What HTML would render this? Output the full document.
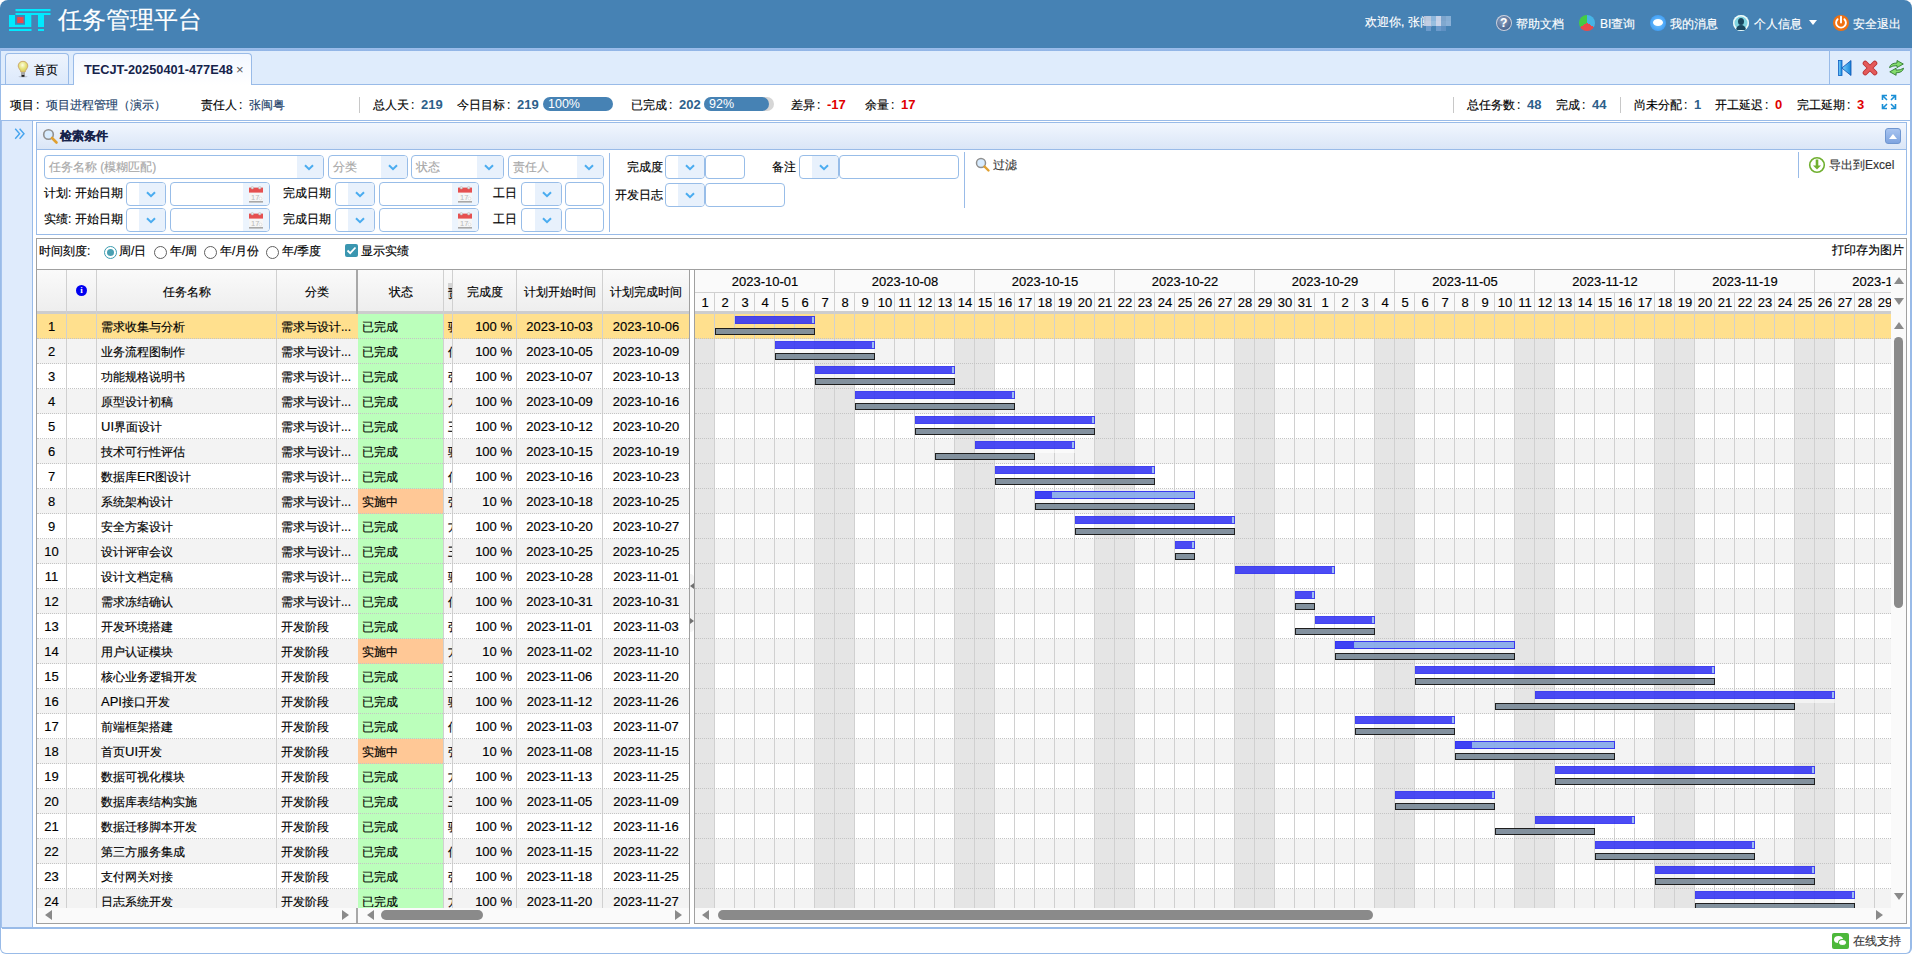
<!DOCTYPE html><html><head><meta charset="utf-8"><style>
*{box-sizing:border-box;margin:0;padding:0}
html,body{width:1912px;height:954px;overflow:hidden;background:#fff}
body{position:relative;font-family:"Liberation Sans",sans-serif;font-size:12px;color:#000}
div{position:absolute}
.t{white-space:nowrap;line-height:14px;-webkit-text-stroke:0.15px}
.n{font-size:13px}
.co{display:inline-block;width:12px;text-indent:2px}
.vl{width:1px;background:#d0d0d0}
</style></head><body>
<div style="left:0px;top:0px;width:1912px;height:48px;background:#4682b4;border-radius:8px 8px 0 0"></div>
<svg style="position:absolute;left:0;top:0" width="60" height="40"><g fill="#00eaff"><rect x="15.5" y="9" width="35" height="2.2"/><rect x="15.5" y="13" width="35" height="2"/><path d="M9 15H15V24.7H25V15H31.3V27H9Z"/><rect x="38" y="15" width="6" height="12"/><rect x="9" y="29" width="22.5" height="2"/><rect x="38" y="29" width="6" height="2"/></g><rect x="17.2" y="17" width="6.3" height="6" fill="#f04848"/></svg>
<div class="t" style="left:58px;top:7px;font-size:24px;line-height:26px;color:#fff">任务管理平台</div>
<div class="t" style="left:1365px;top:15px;font-size:12px;color:#fff">欢迎你, 张闽</div>
<div style="left:1424px;top:16px;width:2px;height:5px;background:#b4c2da"></div>
<div style="left:1426px;top:16px;width:5px;height:5px;background:#bccadf"></div>
<div style="left:1431px;top:16px;width:5px;height:5px;background:#8cb6dc"></div>
<div style="left:1436px;top:16px;width:5px;height:5px;background:#c6d2e8"></div>
<div style="left:1441px;top:16px;width:5px;height:5px;background:#7ca4cc"></div>
<div style="left:1446px;top:16px;width:5px;height:5px;background:#86aed4"></div>
<div style="left:1424px;top:21px;width:2px;height:5px;background:#bcc8de"></div>
<div style="left:1426px;top:21px;width:5px;height:5px;background:#c2cee3"></div>
<div style="left:1431px;top:21px;width:5px;height:5px;background:#98bedf"></div>
<div style="left:1436px;top:21px;width:5px;height:5px;background:#cad4e9"></div>
<div style="left:1441px;top:21px;width:5px;height:5px;background:#80a8cf"></div>
<div style="left:1446px;top:21px;width:5px;height:5px;background:#8ab0d7"></div>
<div style="left:1426px;top:26px;width:5px;height:5px;background:#6c9bcc"></div>
<div style="left:1436px;top:26px;width:5px;height:5px;background:#6c9bcc"></div>
<div style="left:1441px;top:26px;width:5px;height:5px;background:#5f90c2"></div>
<div style="left:1496px;top:15px;width:16px;height:16px;border-radius:50%;background:radial-gradient(circle at 40% 35%,#8aa0c0,#2c4a7a);box-shadow:0 0 0 1px #c8d2e0 inset"><div class="t" style="left:4px;top:1px;font-size:12px;font-weight:bold;color:#fff">?</div></div>
<div class="t" style="left:1516px;top:17px;color:#fff;font-size:12px">帮助文档</div>
<div style="left:1579px;top:15px;width:16px;height:16px;border-radius:50%;background:conic-gradient(#46b4e6 0 120deg,#e84a4a 120deg 240deg,#44cc44 240deg 360deg)"></div>
<div class="t" style="left:1600px;top:17px;color:#fff;font-size:12px">BI查询</div>
<div style="left:1650px;top:15px;width:16px;height:16px;border-radius:50%;background:radial-gradient(circle,#7cc8ff,#2a8ef0)"><div style="left:3px;top:4px;width:10px;height:7px;border-radius:50%;background:#fff"></div></div>
<div class="t" style="left:1670px;top:17px;color:#fff;font-size:12px">我的消息</div>
<div style="left:1733px;top:15px;width:16px;height:16px;border-radius:50%;background:#80d4e0;box-shadow:0 0 0 1.5px #f0f8f8 inset;overflow:hidden"><div style="left:5px;top:3px;width:6px;height:7px;border-radius:50%;background:#1a4860"></div><div style="left:3px;top:10px;width:10px;height:5px;border-radius:5px 5px 0 0;background:#1a4860"></div></div>
<div class="t" style="left:1754px;top:17px;color:#fff;font-size:12px">个人信息</div>
<div style="left:1809px;top:20px;width:0;height:0;border-left:4px solid transparent;border-right:4px solid transparent;border-top:5px solid #fff"></div>
<svg style="position:absolute;left:1832px;top:14px" width="18" height="18"><circle cx="9" cy="9" r="8" fill="#f07010"/><path d="M5.6 5.2A4.9 4.9 0 1 0 12.4 5.2" stroke="#fff" stroke-width="1.9" fill="none" stroke-linecap="round"/><path d="M9 2.8V8.6" stroke="#fff" stroke-width="1.9" stroke-linecap="round"/></svg>
<div class="t" style="left:1853px;top:17px;color:#fff;font-size:12px">安全退出</div>
<div style="left:0px;top:48px;width:1912px;height:906px;border:1px solid #99bbe8;border-right:2px solid #99bbe8;border-top:0;border-bottom:1px solid #99bbe8;border-radius:0 0 6px 6px;background:#fff"></div>
<div style="left:1px;top:48px;width:1909px;height:3px;background:linear-gradient(#9dbeea,#90b4e6)"></div>
<div style="left:1px;top:51px;width:1909px;height:33px;background:#dfecfc"></div>
<div style="left:1px;top:84px;width:1909px;height:1px;background:#99bbe8"></div>
<div style="left:5px;top:53px;width:64px;height:31px;border:1px solid #99bbe8;border-bottom:0;border-radius:4px 4px 0 0;background:linear-gradient(#eef4fd,#dce9fb)"></div>
<div style="left:73px;top:53px;width:179px;height:32px;border:1px solid #99bbe8;border-bottom:0;border-radius:4px 4px 0 0;background:linear-gradient(#f2f7ff,#fff)"></div>
<svg style="position:absolute;left:16px;top:60px" width="14" height="18"><defs><radialGradient id="bl" cx="0.45" cy="0.35" r="0.6"><stop offset="0" stop-color="#fdfde0"/><stop offset="0.6" stop-color="#e6e27a"/><stop offset="1" stop-color="#d8cc60"/></radialGradient></defs><path d="M7 1.3C4.2 1.3 2.2 3.3 2.2 6C2.2 8.3 4.6 9.8 5 12.2H9C9.4 9.8 11.8 8.3 11.8 6C11.8 3.3 9.8 1.3 7 1.3Z" fill="url(#bl)" stroke="#c8a46a" stroke-width="0.9"/><rect x="5" y="12.2" width="4" height="3" fill="#a8a8a8"/><rect x="5.5" y="15" width="3" height="1.8" fill="#222"/><ellipse cx="7" cy="16.6" rx="4.5" ry="0.9" fill="rgba(0,0,0,.15)"/></svg>
<div class="t" style="left:34px;top:63px;font-size:12px">首页</div>
<div class="t" style="left:84px;top:63px;font-size:12.75px;font-weight:bold;color:#15224a;-webkit-text-stroke:0">TECJT-20250401-477E48</div>
<div class="t" style="left:236px;top:63px;font-size:13px;color:#555;-webkit-text-stroke:0">×</div>
<div style="left:1829px;top:50px;width:1px;height:34px;background:#99bbe8"></div>
<svg style="position:absolute;left:1836px;top:58px" width="18" height="20"><defs><linearGradient id="gb" x1="0" x2="1"><stop offset="0" stop-color="#7fd4ff"/><stop offset="1" stop-color="#1684d8"/></linearGradient></defs><rect x="2.5" y="2.5" width="3.5" height="15" fill="url(#gb)" stroke="#0b5cc0" stroke-width="0.8"/><path d="M15 2.5V17.5L5.8 10Z" fill="url(#gb)" stroke="#0b4fb0" stroke-width="0.8"/></svg>
<svg style="position:absolute;left:1862px;top:60px" width="16" height="16"><path d="M3.2 3.2L12.8 12.8M12.8 3.2L3.2 12.8" stroke="#b83030" stroke-width="5" stroke-linecap="round"/><path d="M3.2 3.2L12.8 12.8M12.8 3.2L3.2 12.8" stroke="#e45a5a" stroke-width="3.4" stroke-linecap="round"/></svg>
<svg style="position:absolute;left:1888px;top:59px" width="17" height="18"><g stroke="#2f7a2f" stroke-width="0.9" stroke-linejoin="round" fill="#84dc6c"><path d="M1.5 8.6Q2.5 4 9 4V1.5L15.3 5L9 8.6V6.6Q4.5 6.6 1.5 8.6Z"/><path d="M15.6 9.2Q14.6 13.8 8.1 13.8V16.3L1.8 12.8L8.1 9.2V11.2Q12.6 11.2 15.6 9.2Z"/></g></svg>
<div style="left:1px;top:120px;width:1909px;height:1px;background:#99bbe8"></div>
<div class="t" style="left:10px;top:98px;">项目<span class=co>:</span><span style="color:#1c3f6a">项目进程管理（演示）</span></div>
<div class="t" style="left:201px;top:98px;">责任人<span class=co>:</span><span style="color:#1c3f6a">张闽粤</span></div>
<div style="left:359px;top:97px;width:1px;height:16px;background:#c8c8c8"></div>
<div class="t" style="left:373px;top:98px;font-size:12px">总人天<span class=co>:</span><span style="font-size:13px;font-weight:bold;color:#2d5f8a;-webkit-text-stroke:0">219</span></div>
<div class="t" style="left:457px;top:98px;font-size:12px">今日目标<span class=co>:</span><span style="font-size:13px;font-weight:bold;color:#2d5f8a;-webkit-text-stroke:0">219</span></div>
<div style="left:543px;top:97px;width:70px;height:14px;border-radius:7px;background:#4682b4"></div>
<div class="t" style="left:548px;top:97px;font-size:12.5px;color:#fff;-webkit-text-stroke:0">100%</div>
<div class="t" style="left:631px;top:98px;font-size:12px">已完成<span class=co>:</span><span style="font-size:13px;font-weight:bold;color:#2d5f8a;-webkit-text-stroke:0">202</span></div>
<div style="left:704px;top:97px;width:70px;height:14px;border-radius:7px;background:#d6d6d6"></div>
<div style="left:704px;top:97px;width:65px;height:14px;border-radius:7px;background:#4682b4"></div>
<div class="t" style="left:709px;top:97px;font-size:12.5px;color:#fff;-webkit-text-stroke:0">92%</div>
<div class="t" style="left:791px;top:98px;font-size:12px">差异<span class=co>:</span><span style="font-size:13px;font-weight:bold;color:#e00000;-webkit-text-stroke:0">-17</span></div>
<div class="t" style="left:865px;top:98px;font-size:12px">余量<span class=co>:</span><span style="font-size:13px;font-weight:bold;color:#e00000;-webkit-text-stroke:0">17</span></div>
<div style="left:1453px;top:97px;width:1px;height:16px;background:#c8c8c8"></div>
<div class="t" style="left:1467px;top:98px;font-size:12px">总任务数<span class=co>:</span><span style="font-size:13px;font-weight:bold;color:#2d5f8a;-webkit-text-stroke:0">48</span></div>
<div class="t" style="left:1556px;top:98px;font-size:12px">完成<span class=co>:</span><span style="font-size:13px;font-weight:bold;color:#2d5f8a;-webkit-text-stroke:0">44</span></div>
<div style="left:1620px;top:97px;width:1px;height:16px;background:#c8c8c8"></div>
<div class="t" style="left:1634px;top:98px;font-size:12px">尚未分配<span class=co>:</span><span style="font-size:13px;font-weight:bold;color:#2d5f8a;-webkit-text-stroke:0">1</span></div>
<div class="t" style="left:1715px;top:98px;font-size:12px">开工延迟<span class=co>:</span><span style="font-size:13px;font-weight:bold;color:#e00000;-webkit-text-stroke:0">0</span></div>
<div class="t" style="left:1797px;top:98px;font-size:12px">完工延期<span class=co>:</span><span style="font-size:13px;font-weight:bold;color:#e00000;-webkit-text-stroke:0">3</span></div>
<svg style="position:absolute;left:1881px;top:94px" width="16" height="16"><g stroke="#1a8fd6" stroke-width="1.6" fill="none"><path d="M1.5 6V1.5H6M1.5 1.5L6 6"/><path d="M10 1.5H14.5V6M14.5 1.5L10 6"/><path d="M1.5 10V14.5H6M1.5 14.5L6 10"/><path d="M14.5 10V14.5H10M14.5 14.5L10 10"/></g></svg>
<div style="left:1px;top:121px;width:31px;height:807px;background:#dfebfc;border-left:1px solid #a4c2ec"></div>
<div style="left:32px;top:121px;width:1px;height:807px;background:#99bbe8"></div>
<svg style="position:absolute;left:13px;top:127px" width="13" height="14"><path d="M2.2 1.8L6.6 6.8L2.2 11.8M6.6 1.8L11 6.8L6.6 11.8" stroke="#46a4ee" stroke-width="1.4" fill="none"/></svg>
<div style="left:2px;top:927px;width:1908px;height:2px;background:#99bbe8"></div>
<div style="left:36px;top:122px;width:1871px;height:113px;border:1px solid #99bbe8;background:#fff"></div>
<div style="left:37px;top:123px;width:1869px;height:26px;background:linear-gradient(#f1f6fe,#dae6f7)"></div>
<div style="left:37px;top:149px;width:1869px;height:1px;background:#99bbe8"></div>
<svg style="position:absolute;left:42px;top:128px" width="17" height="17"><circle cx="6.5" cy="6.5" r="4.8" fill="#d8ecff" stroke="#909090" stroke-width="1.6"/><path d="M10 10L14.5 14.5" stroke="#e0a030" stroke-width="2.6" stroke-linecap="round"/></svg>
<div class="t" style="left:60px;top:129px;font-weight:bold;color:#15224a;font-size:12px">检索条件</div>
<div style="left:1885px;top:128px;width:16px;height:16px;border:1px solid #6f96d0;border-radius:3px;background:linear-gradient(#a8c4f0,#7ea4e0)"><div style="left:3px;top:5px;width:0;height:0;border-left:4px solid transparent;border-right:4px solid transparent;border-bottom:5px solid #fff"></div></div>
<div style="left:44px;top:155px;width:280px;height:24px;border:1px solid #98bde8;border-radius:4px;background:#fff;overflow:hidden"><div style="left:252px;top:0;width:27px;height:22px;background:#e8f1fc"></div></div>
<div class="t" style="left:49px;top:160px;color:#a8a8a8;font-size:12px">任务名称 (模糊匹配)</div>
<svg style="position:absolute;left:304px;top:164px" width="10" height="7"><path d="M1 1.2L5 5.2L9 1.2" stroke="#4aacf0" stroke-width="2" fill="none"/></svg>
<div style="left:328px;top:155px;width:80px;height:24px;border:1px solid #98bde8;border-radius:4px;background:#fff;overflow:hidden"><div style="left:52px;top:0;width:27px;height:22px;background:#e8f1fc"></div></div>
<div class="t" style="left:333px;top:160px;color:#a8a8a8;font-size:12px">分类</div>
<svg style="position:absolute;left:388px;top:164px" width="10" height="7"><path d="M1 1.2L5 5.2L9 1.2" stroke="#4aacf0" stroke-width="2" fill="none"/></svg>
<div style="left:411px;top:155px;width:93px;height:24px;border:1px solid #98bde8;border-radius:4px;background:#fff;overflow:hidden"><div style="left:65px;top:0;width:27px;height:22px;background:#e8f1fc"></div></div>
<div class="t" style="left:416px;top:160px;color:#a8a8a8;font-size:12px">状态</div>
<svg style="position:absolute;left:484px;top:164px" width="10" height="7"><path d="M1 1.2L5 5.2L9 1.2" stroke="#4aacf0" stroke-width="2" fill="none"/></svg>
<div style="left:508px;top:155px;width:96px;height:24px;border:1px solid #98bde8;border-radius:4px;background:#fff;overflow:hidden"><div style="left:68px;top:0;width:27px;height:22px;background:#e8f1fc"></div></div>
<div class="t" style="left:513px;top:160px;color:#a8a8a8;font-size:12px">责任人</div>
<svg style="position:absolute;left:584px;top:164px" width="10" height="7"><path d="M1 1.2L5 5.2L9 1.2" stroke="#4aacf0" stroke-width="2" fill="none"/></svg>
<div class="t" style="left:44px;top:186px;font-size:12px">计划: 开始日期</div>
<div style="left:126px;top:182px;width:40px;height:24px;border:1px solid #98bde8;border-radius:4px;background:#fff;overflow:hidden"><div style="left:12px;top:0;width:27px;height:22px;background:#e8f1fc"></div></div>
<svg style="position:absolute;left:146px;top:191px" width="10" height="7"><path d="M1 1.2L5 5.2L9 1.2" stroke="#4aacf0" stroke-width="2" fill="none"/></svg>
<div style="left:170px;top:182px;width:100px;height:24px;border:1px solid #98bde8;border-radius:4px;background:#fff;overflow:hidden"><div style="left:72px;top:0;width:27px;height:22px;background:#ecf4fd"></div></div>
<svg style="position:absolute;left:248px;top:186px" width="16" height="18"><rect x="1" y="4.5" width="14" height="12" fill="#f6f6f6"/><rect x="1" y="15" width="14" height="1.6" fill="#a8a8a8"/><rect x="1" y="1.6" width="14" height="5" fill="#e65050"/><circle cx="4.3" cy="1.8" r="1.3" fill="#e8e8e8" stroke="#b0b0b0" stroke-width="0.5"/><circle cx="11.7" cy="1.8" r="1.3" fill="#e8e8e8" stroke="#b0b0b0" stroke-width="0.5"/><text x="3" y="13.5" font-family="Liberation Sans" font-size="7.5" fill="#b8b8b8">17</text><circle cx="12.5" cy="12.5" r="1.4" fill="#fff" stroke="#c8c8c8" stroke-width="0.5"/></svg>
<div class="t" style="left:283px;top:186px;font-size:12px">完成日期</div>
<div style="left:335px;top:182px;width:40px;height:24px;border:1px solid #98bde8;border-radius:4px;background:#fff;overflow:hidden"><div style="left:12px;top:0;width:27px;height:22px;background:#e8f1fc"></div></div>
<svg style="position:absolute;left:355px;top:191px" width="10" height="7"><path d="M1 1.2L5 5.2L9 1.2" stroke="#4aacf0" stroke-width="2" fill="none"/></svg>
<div style="left:379px;top:182px;width:100px;height:24px;border:1px solid #98bde8;border-radius:4px;background:#fff;overflow:hidden"><div style="left:72px;top:0;width:27px;height:22px;background:#ecf4fd"></div></div>
<svg style="position:absolute;left:457px;top:186px" width="16" height="18"><rect x="1" y="4.5" width="14" height="12" fill="#f6f6f6"/><rect x="1" y="15" width="14" height="1.6" fill="#a8a8a8"/><rect x="1" y="1.6" width="14" height="5" fill="#e65050"/><circle cx="4.3" cy="1.8" r="1.3" fill="#e8e8e8" stroke="#b0b0b0" stroke-width="0.5"/><circle cx="11.7" cy="1.8" r="1.3" fill="#e8e8e8" stroke="#b0b0b0" stroke-width="0.5"/><text x="3" y="13.5" font-family="Liberation Sans" font-size="7.5" fill="#b8b8b8">17</text><circle cx="12.5" cy="12.5" r="1.4" fill="#fff" stroke="#c8c8c8" stroke-width="0.5"/></svg>
<div class="t" style="left:493px;top:186px;font-size:12px">工日</div>
<div style="left:521px;top:182px;width:41px;height:24px;border:1px solid #98bde8;border-radius:4px;background:#fff;overflow:hidden"><div style="left:13px;top:0;width:27px;height:22px;background:#e8f1fc"></div></div>
<svg style="position:absolute;left:542px;top:191px" width="10" height="7"><path d="M1 1.2L5 5.2L9 1.2" stroke="#4aacf0" stroke-width="2" fill="none"/></svg>
<div style="left:565px;top:182px;width:39px;height:24px;border:1px solid #98bde8;border-radius:4px;background:#fff"></div>
<div class="t" style="left:44px;top:212px;font-size:12px">实绩: 开始日期</div>
<div style="left:126px;top:208px;width:40px;height:24px;border:1px solid #98bde8;border-radius:4px;background:#fff;overflow:hidden"><div style="left:12px;top:0;width:27px;height:22px;background:#e8f1fc"></div></div>
<svg style="position:absolute;left:146px;top:217px" width="10" height="7"><path d="M1 1.2L5 5.2L9 1.2" stroke="#4aacf0" stroke-width="2" fill="none"/></svg>
<div style="left:170px;top:208px;width:100px;height:24px;border:1px solid #98bde8;border-radius:4px;background:#fff;overflow:hidden"><div style="left:72px;top:0;width:27px;height:22px;background:#ecf4fd"></div></div>
<svg style="position:absolute;left:248px;top:212px" width="16" height="18"><rect x="1" y="4.5" width="14" height="12" fill="#f6f6f6"/><rect x="1" y="15" width="14" height="1.6" fill="#a8a8a8"/><rect x="1" y="1.6" width="14" height="5" fill="#e65050"/><circle cx="4.3" cy="1.8" r="1.3" fill="#e8e8e8" stroke="#b0b0b0" stroke-width="0.5"/><circle cx="11.7" cy="1.8" r="1.3" fill="#e8e8e8" stroke="#b0b0b0" stroke-width="0.5"/><text x="3" y="13.5" font-family="Liberation Sans" font-size="7.5" fill="#b8b8b8">17</text><circle cx="12.5" cy="12.5" r="1.4" fill="#fff" stroke="#c8c8c8" stroke-width="0.5"/></svg>
<div class="t" style="left:283px;top:212px;font-size:12px">完成日期</div>
<div style="left:335px;top:208px;width:40px;height:24px;border:1px solid #98bde8;border-radius:4px;background:#fff;overflow:hidden"><div style="left:12px;top:0;width:27px;height:22px;background:#e8f1fc"></div></div>
<svg style="position:absolute;left:355px;top:217px" width="10" height="7"><path d="M1 1.2L5 5.2L9 1.2" stroke="#4aacf0" stroke-width="2" fill="none"/></svg>
<div style="left:379px;top:208px;width:100px;height:24px;border:1px solid #98bde8;border-radius:4px;background:#fff;overflow:hidden"><div style="left:72px;top:0;width:27px;height:22px;background:#ecf4fd"></div></div>
<svg style="position:absolute;left:457px;top:212px" width="16" height="18"><rect x="1" y="4.5" width="14" height="12" fill="#f6f6f6"/><rect x="1" y="15" width="14" height="1.6" fill="#a8a8a8"/><rect x="1" y="1.6" width="14" height="5" fill="#e65050"/><circle cx="4.3" cy="1.8" r="1.3" fill="#e8e8e8" stroke="#b0b0b0" stroke-width="0.5"/><circle cx="11.7" cy="1.8" r="1.3" fill="#e8e8e8" stroke="#b0b0b0" stroke-width="0.5"/><text x="3" y="13.5" font-family="Liberation Sans" font-size="7.5" fill="#b8b8b8">17</text><circle cx="12.5" cy="12.5" r="1.4" fill="#fff" stroke="#c8c8c8" stroke-width="0.5"/></svg>
<div class="t" style="left:493px;top:212px;font-size:12px">工日</div>
<div style="left:521px;top:208px;width:41px;height:24px;border:1px solid #98bde8;border-radius:4px;background:#fff;overflow:hidden"><div style="left:13px;top:0;width:27px;height:22px;background:#e8f1fc"></div></div>
<svg style="position:absolute;left:542px;top:217px" width="10" height="7"><path d="M1 1.2L5 5.2L9 1.2" stroke="#4aacf0" stroke-width="2" fill="none"/></svg>
<div style="left:565px;top:208px;width:39px;height:24px;border:1px solid #98bde8;border-radius:4px;background:#fff"></div>
<div style="left:609px;top:153px;width:1px;height:79px;background:#99bbe8"></div>
<div class="t" style="left:627px;top:160px;font-size:12px">完成度</div>
<div style="left:665px;top:155px;width:40px;height:24px;border:1px solid #98bde8;border-radius:4px;background:#fff;overflow:hidden"><div style="left:12px;top:0;width:27px;height:22px;background:#e8f1fc"></div></div>
<svg style="position:absolute;left:685px;top:164px" width="10" height="7"><path d="M1 1.2L5 5.2L9 1.2" stroke="#4aacf0" stroke-width="2" fill="none"/></svg>
<div style="left:705px;top:155px;width:40px;height:24px;border:1px solid #98bde8;border-radius:4px;background:#fff"></div>
<div class="t" style="left:772px;top:160px;font-size:12px">备注</div>
<div style="left:799px;top:155px;width:40px;height:24px;border:1px solid #98bde8;border-radius:4px;background:#fff;overflow:hidden"><div style="left:12px;top:0;width:27px;height:22px;background:#e8f1fc"></div></div>
<svg style="position:absolute;left:819px;top:164px" width="10" height="7"><path d="M1 1.2L5 5.2L9 1.2" stroke="#4aacf0" stroke-width="2" fill="none"/></svg>
<div style="left:839px;top:155px;width:120px;height:24px;border:1px solid #98bde8;border-radius:4px;background:#fff"></div>
<div class="t" style="left:615px;top:188px;font-size:12px">开发日志</div>
<div style="left:665px;top:183px;width:40px;height:24px;border:1px solid #98bde8;border-radius:4px;background:#fff;overflow:hidden"><div style="left:12px;top:0;width:27px;height:22px;background:#e8f1fc"></div></div>
<svg style="position:absolute;left:685px;top:192px" width="10" height="7"><path d="M1 1.2L5 5.2L9 1.2" stroke="#4aacf0" stroke-width="2" fill="none"/></svg>
<div style="left:705px;top:183px;width:80px;height:24px;border:1px solid #98bde8;border-radius:4px;background:#fff"></div>
<div style="left:964px;top:152px;width:1px;height:56px;background:#99bbe8"></div>
<svg style="position:absolute;left:975px;top:157px" width="16" height="16"><circle cx="6" cy="6" r="4.5" fill="#d8ecff" stroke="#909090" stroke-width="1.5"/><path d="M9.5 9.5L13.5 13.5" stroke="#e0a030" stroke-width="2.4" stroke-linecap="round"/></svg>
<div class="t" style="left:993px;top:158px;font-size:12px;color:#333">过滤</div>
<div style="left:1798px;top:152px;width:1px;height:26px;background:#99bbe8"></div>
<svg style="position:absolute;left:1808px;top:156px" width="18" height="18"><circle cx="9" cy="9" r="7.3" fill="#fff" stroke="#70b030" stroke-width="1.6"/><path d="M9 3.5V11" stroke="#70b030" stroke-width="2.6"/><path d="M5 9.5L9 13.5L13 9.5Z" fill="#70b030"/></svg>
<div class="t" style="left:1829px;top:158px;font-size:12px;color:#333">导出到Excel</div>
<div style="left:36px;top:238px;width:1871px;height:686px;border:1px solid #a0a0a0;background:#fff"></div>
<div class="t" style="left:39px;top:244px;font-size:12px">时间刻度:</div>
<div style="left:104px;top:246px;width:13px;height:13px;border-radius:50%;border:1px solid #3d9cb0;background:#fff"><div style="left:2px;top:2px;width:7px;height:7px;border-radius:50%;background:#4aa0b2"></div></div>
<div class="t" style="left:119px;top:244px;">周/日</div>
<div style="left:154px;top:246px;width:13px;height:13px;border-radius:50%;border:1px solid #606060;background:#fff"></div>
<div class="t" style="left:170px;top:244px;">年/周</div>
<div style="left:204px;top:246px;width:13px;height:13px;border-radius:50%;border:1px solid #606060;background:#fff"></div>
<div class="t" style="left:220px;top:244px;">年/月份</div>
<div style="left:266px;top:246px;width:13px;height:13px;border-radius:50%;border:1px solid #606060;background:#fff"></div>
<div class="t" style="left:282px;top:244px;">年/季度</div>
<div style="left:345px;top:244px;width:13px;height:13px;border-radius:2px;background:#3a96b0"><svg style="position:absolute;left:0;top:0" width="13" height="13"><path d="M2.5 6.5L5.2 9.2L10.5 3.5" stroke="#fff" stroke-width="1.8" fill="none"/></svg></div>
<div class="t" style="left:361px;top:244px;">显示实绩</div>
<div class="t" style="left:1832px;top:243px;">打印存为图片</div>
<div style="left:37px;top:269px;width:1869px;height:1px;background:#a0a0a0"></div>
<div style="left:37px;top:270px;width:652px;height:41px;background:linear-gradient(#fafafa,#eeeeee)"></div>
<div style="left:37px;top:311px;width:652px;height:3px;background:#cdcdcd"></div>
<div style="left:689px;top:270px;width:1px;height:654px;background:#a0a0a0"></div>
<div style="left:694px;top:270px;width:1px;height:654px;background:#a0a0a0"></div>
<div style="left:356px;top:270px;width:2px;height:638px;background:#a8a8a8"></div>
<div style="left:37px;top:314px;width:652px;height:25px;background:#ffe08e"></div>
<div style="left:358px;top:314px;width:85px;height:25px;background:#bbffbb"></div>
<div style="left:37px;top:339px;width:652px;height:25px;background:#f3f3f3"></div>
<div style="left:358px;top:339px;width:85px;height:25px;background:#bbffbb"></div>
<div style="left:37px;top:364px;width:652px;height:25px;background:#fff"></div>
<div style="left:358px;top:364px;width:85px;height:25px;background:#bbffbb"></div>
<div style="left:37px;top:389px;width:652px;height:25px;background:#f3f3f3"></div>
<div style="left:358px;top:389px;width:85px;height:25px;background:#bbffbb"></div>
<div style="left:37px;top:414px;width:652px;height:25px;background:#fff"></div>
<div style="left:358px;top:414px;width:85px;height:25px;background:#bbffbb"></div>
<div style="left:37px;top:439px;width:652px;height:25px;background:#f3f3f3"></div>
<div style="left:358px;top:439px;width:85px;height:25px;background:#bbffbb"></div>
<div style="left:37px;top:464px;width:652px;height:25px;background:#fff"></div>
<div style="left:358px;top:464px;width:85px;height:25px;background:#bbffbb"></div>
<div style="left:37px;top:489px;width:652px;height:25px;background:#f3f3f3"></div>
<div style="left:358px;top:489px;width:85px;height:25px;background:#ffc896"></div>
<div style="left:37px;top:514px;width:652px;height:25px;background:#fff"></div>
<div style="left:358px;top:514px;width:85px;height:25px;background:#bbffbb"></div>
<div style="left:37px;top:539px;width:652px;height:25px;background:#f3f3f3"></div>
<div style="left:358px;top:539px;width:85px;height:25px;background:#bbffbb"></div>
<div style="left:37px;top:564px;width:652px;height:25px;background:#fff"></div>
<div style="left:358px;top:564px;width:85px;height:25px;background:#bbffbb"></div>
<div style="left:37px;top:589px;width:652px;height:25px;background:#f3f3f3"></div>
<div style="left:358px;top:589px;width:85px;height:25px;background:#bbffbb"></div>
<div style="left:37px;top:614px;width:652px;height:25px;background:#fff"></div>
<div style="left:358px;top:614px;width:85px;height:25px;background:#bbffbb"></div>
<div style="left:37px;top:639px;width:652px;height:25px;background:#f3f3f3"></div>
<div style="left:358px;top:639px;width:85px;height:25px;background:#ffc896"></div>
<div style="left:37px;top:664px;width:652px;height:25px;background:#fff"></div>
<div style="left:358px;top:664px;width:85px;height:25px;background:#bbffbb"></div>
<div style="left:37px;top:689px;width:652px;height:25px;background:#f3f3f3"></div>
<div style="left:358px;top:689px;width:85px;height:25px;background:#bbffbb"></div>
<div style="left:37px;top:714px;width:652px;height:25px;background:#fff"></div>
<div style="left:358px;top:714px;width:85px;height:25px;background:#bbffbb"></div>
<div style="left:37px;top:739px;width:652px;height:25px;background:#f3f3f3"></div>
<div style="left:358px;top:739px;width:85px;height:25px;background:#ffc896"></div>
<div style="left:37px;top:764px;width:652px;height:25px;background:#fff"></div>
<div style="left:358px;top:764px;width:85px;height:25px;background:#bbffbb"></div>
<div style="left:37px;top:789px;width:652px;height:25px;background:#f3f3f3"></div>
<div style="left:358px;top:789px;width:85px;height:25px;background:#bbffbb"></div>
<div style="left:37px;top:814px;width:652px;height:25px;background:#fff"></div>
<div style="left:358px;top:814px;width:85px;height:25px;background:#bbffbb"></div>
<div style="left:37px;top:839px;width:652px;height:25px;background:#f3f3f3"></div>
<div style="left:358px;top:839px;width:85px;height:25px;background:#bbffbb"></div>
<div style="left:37px;top:864px;width:652px;height:25px;background:#fff"></div>
<div style="left:358px;top:864px;width:85px;height:25px;background:#bbffbb"></div>
<div style="left:37px;top:889px;width:652px;height:19px;background:#f3f3f3"></div>
<div style="left:358px;top:889px;width:85px;height:19px;background:#bbffbb"></div>
<div style="left:66px;top:270px;width:1px;height:638px;background:#d0d0d0"></div>
<div style="left:96px;top:270px;width:1px;height:638px;background:#d0d0d0"></div>
<div style="left:276px;top:270px;width:1px;height:638px;background:#d0d0d0"></div>
<div style="left:443px;top:270px;width:1px;height:638px;background:#d0d0d0"></div>
<div style="left:452px;top:270px;width:1px;height:638px;background:#d0d0d0"></div>
<div style="left:516px;top:270px;width:1px;height:638px;background:#d0d0d0"></div>
<div style="left:602px;top:270px;width:1px;height:638px;background:#d0d0d0"></div>
<div style="left:37px;top:338px;width:652px;height:1px;border-top:1px dotted #c4c4c4"></div>
<div style="left:37px;top:363px;width:652px;height:1px;border-top:1px dotted #c4c4c4"></div>
<div style="left:37px;top:388px;width:652px;height:1px;border-top:1px dotted #c4c4c4"></div>
<div style="left:37px;top:413px;width:652px;height:1px;border-top:1px dotted #c4c4c4"></div>
<div style="left:37px;top:438px;width:652px;height:1px;border-top:1px dotted #c4c4c4"></div>
<div style="left:37px;top:463px;width:652px;height:1px;border-top:1px dotted #c4c4c4"></div>
<div style="left:37px;top:488px;width:652px;height:1px;border-top:1px dotted #c4c4c4"></div>
<div style="left:37px;top:513px;width:652px;height:1px;border-top:1px dotted #c4c4c4"></div>
<div style="left:37px;top:538px;width:652px;height:1px;border-top:1px dotted #c4c4c4"></div>
<div style="left:37px;top:563px;width:652px;height:1px;border-top:1px dotted #c4c4c4"></div>
<div style="left:37px;top:588px;width:652px;height:1px;border-top:1px dotted #c4c4c4"></div>
<div style="left:37px;top:613px;width:652px;height:1px;border-top:1px dotted #c4c4c4"></div>
<div style="left:37px;top:638px;width:652px;height:1px;border-top:1px dotted #c4c4c4"></div>
<div style="left:37px;top:663px;width:652px;height:1px;border-top:1px dotted #c4c4c4"></div>
<div style="left:37px;top:688px;width:652px;height:1px;border-top:1px dotted #c4c4c4"></div>
<div style="left:37px;top:713px;width:652px;height:1px;border-top:1px dotted #c4c4c4"></div>
<div style="left:37px;top:738px;width:652px;height:1px;border-top:1px dotted #c4c4c4"></div>
<div style="left:37px;top:763px;width:652px;height:1px;border-top:1px dotted #c4c4c4"></div>
<div style="left:37px;top:788px;width:652px;height:1px;border-top:1px dotted #c4c4c4"></div>
<div style="left:37px;top:813px;width:652px;height:1px;border-top:1px dotted #c4c4c4"></div>
<div style="left:37px;top:838px;width:652px;height:1px;border-top:1px dotted #c4c4c4"></div>
<div style="left:37px;top:863px;width:652px;height:1px;border-top:1px dotted #c4c4c4"></div>
<div style="left:37px;top:888px;width:652px;height:1px;border-top:1px dotted #c4c4c4"></div>
<div style="left:76px;top:285px;width:11px;height:11px;border-radius:50%;background:#0000f0"><div class="t" style="left:0;top:0;width:11px;text-align:center;color:#fff;font:bold 9px/11px Liberation Serif;-webkit-text-stroke:0">i</div></div>
<div class="t" style="left:97px;top:285px;width:179px;text-align:center">任务名称</div>
<div class="t" style="left:277px;top:285px;width:79px;text-align:center">分类</div>
<div class="t" style="left:358px;top:285px;width:85px;text-align:center">状态</div>
<div style="left:448px;top:283px;width:4px;height:16px;background:#d4d4d4"></div>
<div class="t" style="left:444px;top:286px;width:8px;height:14px;overflow:hidden"><div class="t" style="left:4px;top:0">责</div></div>
<div class="t" style="left:453px;top:285px;width:63px;text-align:center">完成度</div>
<div class="t" style="left:517px;top:285px;width:85px;text-align:center">计划开始时间</div>
<div class="t" style="left:603px;top:285px;width:86px;text-align:center">计划完成时间</div>
<div class="t" style="left:37px;top:320px;width:29px;text-align:center"><span class="n">1</span></div>
<div class="t" style="left:101px;top:320px;">需求收集与分析</div>
<div class="t" style="left:281px;top:320px;">需求与设计...</div>
<div class="t" style="left:362px;top:320px;">已完成</div>
<div style="left:444px;top:320px;width:8px;height:15px;overflow:hidden;" class="t"><div class="t" style="left:4px;top:0">骆</div></div>
<div class="t" style="left:453px;top:320px;width:59px;text-align:right;"><span class="n">100 %</span></div>
<div class="t" style="left:517px;top:320px;width:85px;text-align:center"><span class="n">2023-10-03</span></div>
<div class="t" style="left:603px;top:320px;width:86px;text-align:center"><span class="n">2023-10-06</span></div>
<div class="t" style="left:37px;top:345px;width:29px;text-align:center"><span class="n">2</span></div>
<div class="t" style="left:101px;top:345px;">业务流程图制作</div>
<div class="t" style="left:281px;top:345px;">需求与设计...</div>
<div class="t" style="left:362px;top:345px;">已完成</div>
<div style="left:444px;top:345px;width:8px;height:15px;overflow:hidden;" class="t"><div class="t" style="left:4px;top:0">何</div></div>
<div class="t" style="left:453px;top:345px;width:59px;text-align:right;"><span class="n">100 %</span></div>
<div class="t" style="left:517px;top:345px;width:85px;text-align:center"><span class="n">2023-10-05</span></div>
<div class="t" style="left:603px;top:345px;width:86px;text-align:center"><span class="n">2023-10-09</span></div>
<div class="t" style="left:37px;top:370px;width:29px;text-align:center"><span class="n">3</span></div>
<div class="t" style="left:101px;top:370px;">功能规格说明书</div>
<div class="t" style="left:281px;top:370px;">需求与设计...</div>
<div class="t" style="left:362px;top:370px;">已完成</div>
<div style="left:444px;top:370px;width:8px;height:15px;overflow:hidden;" class="t"><div class="t" style="left:4px;top:0">张</div></div>
<div class="t" style="left:453px;top:370px;width:59px;text-align:right;"><span class="n">100 %</span></div>
<div class="t" style="left:517px;top:370px;width:85px;text-align:center"><span class="n">2023-10-07</span></div>
<div class="t" style="left:603px;top:370px;width:86px;text-align:center"><span class="n">2023-10-13</span></div>
<div class="t" style="left:37px;top:395px;width:29px;text-align:center"><span class="n">4</span></div>
<div class="t" style="left:101px;top:395px;">原型设计初稿</div>
<div class="t" style="left:281px;top:395px;">需求与设计...</div>
<div class="t" style="left:362px;top:395px;">已完成</div>
<div style="left:444px;top:395px;width:8px;height:15px;overflow:hidden;" class="t"><div class="t" style="left:4px;top:0">方</div></div>
<div class="t" style="left:453px;top:395px;width:59px;text-align:right;"><span class="n">100 %</span></div>
<div class="t" style="left:517px;top:395px;width:85px;text-align:center"><span class="n">2023-10-09</span></div>
<div class="t" style="left:603px;top:395px;width:86px;text-align:center"><span class="n">2023-10-16</span></div>
<div class="t" style="left:37px;top:420px;width:29px;text-align:center"><span class="n">5</span></div>
<div class="t" style="left:101px;top:420px;"><span class="n">UI</span>界面设计</div>
<div class="t" style="left:281px;top:420px;">需求与设计...</div>
<div class="t" style="left:362px;top:420px;">已完成</div>
<div style="left:444px;top:420px;width:8px;height:15px;overflow:hidden;" class="t"><div class="t" style="left:4px;top:0">王</div></div>
<div class="t" style="left:453px;top:420px;width:59px;text-align:right;"><span class="n">100 %</span></div>
<div class="t" style="left:517px;top:420px;width:85px;text-align:center"><span class="n">2023-10-12</span></div>
<div class="t" style="left:603px;top:420px;width:86px;text-align:center"><span class="n">2023-10-20</span></div>
<div class="t" style="left:37px;top:445px;width:29px;text-align:center"><span class="n">6</span></div>
<div class="t" style="left:101px;top:445px;">技术可行性评估</div>
<div class="t" style="left:281px;top:445px;">需求与设计...</div>
<div class="t" style="left:362px;top:445px;">已完成</div>
<div style="left:444px;top:445px;width:8px;height:15px;overflow:hidden;" class="t"><div class="t" style="left:4px;top:0">骆</div></div>
<div class="t" style="left:453px;top:445px;width:59px;text-align:right;"><span class="n">100 %</span></div>
<div class="t" style="left:517px;top:445px;width:85px;text-align:center"><span class="n">2023-10-15</span></div>
<div class="t" style="left:603px;top:445px;width:86px;text-align:center"><span class="n">2023-10-19</span></div>
<div class="t" style="left:37px;top:470px;width:29px;text-align:center"><span class="n">7</span></div>
<div class="t" style="left:101px;top:470px;">数据库<span class="n">ER</span>图设计</div>
<div class="t" style="left:281px;top:470px;">需求与设计...</div>
<div class="t" style="left:362px;top:470px;">已完成</div>
<div style="left:444px;top:470px;width:8px;height:15px;overflow:hidden;" class="t"><div class="t" style="left:4px;top:0">何</div></div>
<div class="t" style="left:453px;top:470px;width:59px;text-align:right;"><span class="n">100 %</span></div>
<div class="t" style="left:517px;top:470px;width:85px;text-align:center"><span class="n">2023-10-16</span></div>
<div class="t" style="left:603px;top:470px;width:86px;text-align:center"><span class="n">2023-10-23</span></div>
<div class="t" style="left:37px;top:495px;width:29px;text-align:center"><span class="n">8</span></div>
<div class="t" style="left:101px;top:495px;">系统架构设计</div>
<div class="t" style="left:281px;top:495px;">需求与设计...</div>
<div class="t" style="left:362px;top:495px;">实施中</div>
<div style="left:444px;top:495px;width:8px;height:15px;overflow:hidden;" class="t"><div class="t" style="left:4px;top:0">张</div></div>
<div class="t" style="left:453px;top:495px;width:59px;text-align:right;"><span class="n">10 %</span></div>
<div class="t" style="left:517px;top:495px;width:85px;text-align:center"><span class="n">2023-10-18</span></div>
<div class="t" style="left:603px;top:495px;width:86px;text-align:center"><span class="n">2023-10-25</span></div>
<div class="t" style="left:37px;top:520px;width:29px;text-align:center"><span class="n">9</span></div>
<div class="t" style="left:101px;top:520px;">安全方案设计</div>
<div class="t" style="left:281px;top:520px;">需求与设计...</div>
<div class="t" style="left:362px;top:520px;">已完成</div>
<div style="left:444px;top:520px;width:8px;height:15px;overflow:hidden;" class="t"><div class="t" style="left:4px;top:0">方</div></div>
<div class="t" style="left:453px;top:520px;width:59px;text-align:right;"><span class="n">100 %</span></div>
<div class="t" style="left:517px;top:520px;width:85px;text-align:center"><span class="n">2023-10-20</span></div>
<div class="t" style="left:603px;top:520px;width:86px;text-align:center"><span class="n">2023-10-27</span></div>
<div class="t" style="left:37px;top:545px;width:29px;text-align:center"><span class="n">10</span></div>
<div class="t" style="left:101px;top:545px;">设计评审会议</div>
<div class="t" style="left:281px;top:545px;">需求与设计...</div>
<div class="t" style="left:362px;top:545px;">已完成</div>
<div style="left:444px;top:545px;width:8px;height:15px;overflow:hidden;" class="t"><div class="t" style="left:4px;top:0">王</div></div>
<div class="t" style="left:453px;top:545px;width:59px;text-align:right;"><span class="n">100 %</span></div>
<div class="t" style="left:517px;top:545px;width:85px;text-align:center"><span class="n">2023-10-25</span></div>
<div class="t" style="left:603px;top:545px;width:86px;text-align:center"><span class="n">2023-10-25</span></div>
<div class="t" style="left:37px;top:570px;width:29px;text-align:center"><span class="n">11</span></div>
<div class="t" style="left:101px;top:570px;">设计文档定稿</div>
<div class="t" style="left:281px;top:570px;">需求与设计...</div>
<div class="t" style="left:362px;top:570px;">已完成</div>
<div style="left:444px;top:570px;width:8px;height:15px;overflow:hidden;" class="t"><div class="t" style="left:4px;top:0">骆</div></div>
<div class="t" style="left:453px;top:570px;width:59px;text-align:right;"><span class="n">100 %</span></div>
<div class="t" style="left:517px;top:570px;width:85px;text-align:center"><span class="n">2023-10-28</span></div>
<div class="t" style="left:603px;top:570px;width:86px;text-align:center"><span class="n">2023-11-01</span></div>
<div class="t" style="left:37px;top:595px;width:29px;text-align:center"><span class="n">12</span></div>
<div class="t" style="left:101px;top:595px;">需求冻结确认</div>
<div class="t" style="left:281px;top:595px;">需求与设计...</div>
<div class="t" style="left:362px;top:595px;">已完成</div>
<div style="left:444px;top:595px;width:8px;height:15px;overflow:hidden;" class="t"><div class="t" style="left:4px;top:0">何</div></div>
<div class="t" style="left:453px;top:595px;width:59px;text-align:right;"><span class="n">100 %</span></div>
<div class="t" style="left:517px;top:595px;width:85px;text-align:center"><span class="n">2023-10-31</span></div>
<div class="t" style="left:603px;top:595px;width:86px;text-align:center"><span class="n">2023-10-31</span></div>
<div class="t" style="left:37px;top:620px;width:29px;text-align:center"><span class="n">13</span></div>
<div class="t" style="left:101px;top:620px;">开发环境搭建</div>
<div class="t" style="left:281px;top:620px;">开发阶段</div>
<div class="t" style="left:362px;top:620px;">已完成</div>
<div style="left:444px;top:620px;width:8px;height:15px;overflow:hidden;" class="t"><div class="t" style="left:4px;top:0">张</div></div>
<div class="t" style="left:453px;top:620px;width:59px;text-align:right;"><span class="n">100 %</span></div>
<div class="t" style="left:517px;top:620px;width:85px;text-align:center"><span class="n">2023-11-01</span></div>
<div class="t" style="left:603px;top:620px;width:86px;text-align:center"><span class="n">2023-11-03</span></div>
<div class="t" style="left:37px;top:645px;width:29px;text-align:center"><span class="n">14</span></div>
<div class="t" style="left:101px;top:645px;">用户认证模块</div>
<div class="t" style="left:281px;top:645px;">开发阶段</div>
<div class="t" style="left:362px;top:645px;">实施中</div>
<div style="left:444px;top:645px;width:8px;height:15px;overflow:hidden;" class="t"><div class="t" style="left:4px;top:0">方</div></div>
<div class="t" style="left:453px;top:645px;width:59px;text-align:right;"><span class="n">10 %</span></div>
<div class="t" style="left:517px;top:645px;width:85px;text-align:center"><span class="n">2023-11-02</span></div>
<div class="t" style="left:603px;top:645px;width:86px;text-align:center"><span class="n">2023-11-10</span></div>
<div class="t" style="left:37px;top:670px;width:29px;text-align:center"><span class="n">15</span></div>
<div class="t" style="left:101px;top:670px;">核心业务逻辑开发</div>
<div class="t" style="left:281px;top:670px;">开发阶段</div>
<div class="t" style="left:362px;top:670px;">已完成</div>
<div style="left:444px;top:670px;width:8px;height:15px;overflow:hidden;" class="t"><div class="t" style="left:4px;top:0">王</div></div>
<div class="t" style="left:453px;top:670px;width:59px;text-align:right;"><span class="n">100 %</span></div>
<div class="t" style="left:517px;top:670px;width:85px;text-align:center"><span class="n">2023-11-06</span></div>
<div class="t" style="left:603px;top:670px;width:86px;text-align:center"><span class="n">2023-11-20</span></div>
<div class="t" style="left:37px;top:695px;width:29px;text-align:center"><span class="n">16</span></div>
<div class="t" style="left:101px;top:695px;"><span class="n">API</span>接口开发</div>
<div class="t" style="left:281px;top:695px;">开发阶段</div>
<div class="t" style="left:362px;top:695px;">已完成</div>
<div style="left:444px;top:695px;width:8px;height:15px;overflow:hidden;" class="t"><div class="t" style="left:4px;top:0">骆</div></div>
<div class="t" style="left:453px;top:695px;width:59px;text-align:right;"><span class="n">100 %</span></div>
<div class="t" style="left:517px;top:695px;width:85px;text-align:center"><span class="n">2023-11-12</span></div>
<div class="t" style="left:603px;top:695px;width:86px;text-align:center"><span class="n">2023-11-26</span></div>
<div class="t" style="left:37px;top:720px;width:29px;text-align:center"><span class="n">17</span></div>
<div class="t" style="left:101px;top:720px;">前端框架搭建</div>
<div class="t" style="left:281px;top:720px;">开发阶段</div>
<div class="t" style="left:362px;top:720px;">已完成</div>
<div style="left:444px;top:720px;width:8px;height:15px;overflow:hidden;" class="t"><div class="t" style="left:4px;top:0">何</div></div>
<div class="t" style="left:453px;top:720px;width:59px;text-align:right;"><span class="n">100 %</span></div>
<div class="t" style="left:517px;top:720px;width:85px;text-align:center"><span class="n">2023-11-03</span></div>
<div class="t" style="left:603px;top:720px;width:86px;text-align:center"><span class="n">2023-11-07</span></div>
<div class="t" style="left:37px;top:745px;width:29px;text-align:center"><span class="n">18</span></div>
<div class="t" style="left:101px;top:745px;">首页<span class="n">UI</span>开发</div>
<div class="t" style="left:281px;top:745px;">开发阶段</div>
<div class="t" style="left:362px;top:745px;">实施中</div>
<div style="left:444px;top:745px;width:8px;height:15px;overflow:hidden;" class="t"><div class="t" style="left:4px;top:0">张</div></div>
<div class="t" style="left:453px;top:745px;width:59px;text-align:right;"><span class="n">10 %</span></div>
<div class="t" style="left:517px;top:745px;width:85px;text-align:center"><span class="n">2023-11-08</span></div>
<div class="t" style="left:603px;top:745px;width:86px;text-align:center"><span class="n">2023-11-15</span></div>
<div class="t" style="left:37px;top:770px;width:29px;text-align:center"><span class="n">19</span></div>
<div class="t" style="left:101px;top:770px;">数据可视化模块</div>
<div class="t" style="left:281px;top:770px;">开发阶段</div>
<div class="t" style="left:362px;top:770px;">已完成</div>
<div style="left:444px;top:770px;width:8px;height:15px;overflow:hidden;" class="t"><div class="t" style="left:4px;top:0">方</div></div>
<div class="t" style="left:453px;top:770px;width:59px;text-align:right;"><span class="n">100 %</span></div>
<div class="t" style="left:517px;top:770px;width:85px;text-align:center"><span class="n">2023-11-13</span></div>
<div class="t" style="left:603px;top:770px;width:86px;text-align:center"><span class="n">2023-11-25</span></div>
<div class="t" style="left:37px;top:795px;width:29px;text-align:center"><span class="n">20</span></div>
<div class="t" style="left:101px;top:795px;">数据库表结构实施</div>
<div class="t" style="left:281px;top:795px;">开发阶段</div>
<div class="t" style="left:362px;top:795px;">已完成</div>
<div style="left:444px;top:795px;width:8px;height:15px;overflow:hidden;" class="t"><div class="t" style="left:4px;top:0">王</div></div>
<div class="t" style="left:453px;top:795px;width:59px;text-align:right;"><span class="n">100 %</span></div>
<div class="t" style="left:517px;top:795px;width:85px;text-align:center"><span class="n">2023-11-05</span></div>
<div class="t" style="left:603px;top:795px;width:86px;text-align:center"><span class="n">2023-11-09</span></div>
<div class="t" style="left:37px;top:820px;width:29px;text-align:center"><span class="n">21</span></div>
<div class="t" style="left:101px;top:820px;">数据迁移脚本开发</div>
<div class="t" style="left:281px;top:820px;">开发阶段</div>
<div class="t" style="left:362px;top:820px;">已完成</div>
<div style="left:444px;top:820px;width:8px;height:15px;overflow:hidden;" class="t"><div class="t" style="left:4px;top:0">骆</div></div>
<div class="t" style="left:453px;top:820px;width:59px;text-align:right;"><span class="n">100 %</span></div>
<div class="t" style="left:517px;top:820px;width:85px;text-align:center"><span class="n">2023-11-12</span></div>
<div class="t" style="left:603px;top:820px;width:86px;text-align:center"><span class="n">2023-11-16</span></div>
<div class="t" style="left:37px;top:845px;width:29px;text-align:center"><span class="n">22</span></div>
<div class="t" style="left:101px;top:845px;">第三方服务集成</div>
<div class="t" style="left:281px;top:845px;">开发阶段</div>
<div class="t" style="left:362px;top:845px;">已完成</div>
<div style="left:444px;top:845px;width:8px;height:15px;overflow:hidden;" class="t"><div class="t" style="left:4px;top:0">何</div></div>
<div class="t" style="left:453px;top:845px;width:59px;text-align:right;"><span class="n">100 %</span></div>
<div class="t" style="left:517px;top:845px;width:85px;text-align:center"><span class="n">2023-11-15</span></div>
<div class="t" style="left:603px;top:845px;width:86px;text-align:center"><span class="n">2023-11-22</span></div>
<div class="t" style="left:37px;top:870px;width:29px;text-align:center"><span class="n">23</span></div>
<div class="t" style="left:101px;top:870px;">支付网关对接</div>
<div class="t" style="left:281px;top:870px;">开发阶段</div>
<div class="t" style="left:362px;top:870px;">已完成</div>
<div style="left:444px;top:870px;width:8px;height:15px;overflow:hidden;" class="t"><div class="t" style="left:4px;top:0">张</div></div>
<div class="t" style="left:453px;top:870px;width:59px;text-align:right;"><span class="n">100 %</span></div>
<div class="t" style="left:517px;top:870px;width:85px;text-align:center"><span class="n">2023-11-18</span></div>
<div class="t" style="left:603px;top:870px;width:86px;text-align:center"><span class="n">2023-11-25</span></div>
<div class="t" style="left:37px;top:895px;width:29px;text-align:center"><span class="n">24</span></div>
<div class="t" style="left:101px;top:895px;clip-path:inset(0 0 2px 0);">日志系统开发</div>
<div class="t" style="left:281px;top:895px;clip-path:inset(0 0 2px 0);">开发阶段</div>
<div class="t" style="left:362px;top:895px;clip-path:inset(0 0 2px 0);">已完成</div>
<div style="left:444px;top:895px;width:8px;height:15px;overflow:hidden;clip-path:inset(0 0 2px 0);" class="t"><div class="t" style="left:4px;top:0">方</div></div>
<div class="t" style="left:453px;top:895px;width:59px;text-align:right;clip-path:inset(0 0 2px 0);"><span class="n">100 %</span></div>
<div class="t" style="left:517px;top:895px;width:85px;text-align:center"><span class="n">2023-11-20</span></div>
<div class="t" style="left:603px;top:895px;width:86px;text-align:center"><span class="n">2023-11-27</span></div>
<div style="left:37px;top:908px;width:652px;height:15px;background:#fafafa"></div>
<div style="left:356px;top:908px;width:2px;height:15px;background:#a8a8a8"></div>
<div style="left:45px;top:910px;width:0;height:0;border-top:5px solid transparent;border-bottom:5px solid transparent;border-right:7px solid #8a8a8a"></div>
<div style="left:342px;top:910px;width:0;height:0;border-top:5px solid transparent;border-bottom:5px solid transparent;border-left:7px solid #8a8a8a"></div>
<div style="left:367px;top:910px;width:0;height:0;border-top:5px solid transparent;border-bottom:5px solid transparent;border-right:7px solid #8a8a8a"></div>
<div style="left:675px;top:910px;width:0;height:0;border-top:5px solid transparent;border-bottom:5px solid transparent;border-left:7px solid #8a8a8a"></div>
<div style="left:381px;top:910px;width:102px;height:10px;border-radius:5px;background:#8a8a8a"></div>
<div style="left:690px;top:270px;width:4px;height:654px;background:#fff"></div>
<div style="left:690px;top:574px;width:4px;height:58px;border-radius:0 6px 6px 0;background:#f4f4f4"></div>
<div style="left:690px;top:583px;width:0;height:0;border-top:3px solid transparent;border-bottom:3px solid transparent;border-right:4px solid #707070"></div>
<div style="left:690px;top:618px;width:0;height:0;border-top:3px solid transparent;border-bottom:3px solid transparent;border-left:4px solid #707070"></div>
<div style="left:695px;top:270px;width:1196px;height:41px;background:#fafafa"></div>
<div style="left:695px;top:292px;width:1196px;height:1px;background:#d0d0d0"></div>
<div style="left:695px;top:311px;width:1196px;height:3px;background:#cdcdcd"></div>
<div style="left:695px;top:314px;width:1196px;height:25px;background:#fff"></div>
<div style="left:695px;top:339px;width:1196px;height:25px;background:#f3f3f3"></div>
<div style="left:695px;top:364px;width:1196px;height:25px;background:#fff"></div>
<div style="left:695px;top:389px;width:1196px;height:25px;background:#f3f3f3"></div>
<div style="left:695px;top:414px;width:1196px;height:25px;background:#fff"></div>
<div style="left:695px;top:439px;width:1196px;height:25px;background:#f3f3f3"></div>
<div style="left:695px;top:464px;width:1196px;height:25px;background:#fff"></div>
<div style="left:695px;top:489px;width:1196px;height:25px;background:#f3f3f3"></div>
<div style="left:695px;top:514px;width:1196px;height:25px;background:#fff"></div>
<div style="left:695px;top:539px;width:1196px;height:25px;background:#f3f3f3"></div>
<div style="left:695px;top:564px;width:1196px;height:25px;background:#fff"></div>
<div style="left:695px;top:589px;width:1196px;height:25px;background:#f3f3f3"></div>
<div style="left:695px;top:614px;width:1196px;height:25px;background:#fff"></div>
<div style="left:695px;top:639px;width:1196px;height:25px;background:#f3f3f3"></div>
<div style="left:695px;top:664px;width:1196px;height:25px;background:#fff"></div>
<div style="left:695px;top:689px;width:1196px;height:25px;background:#f3f3f3"></div>
<div style="left:695px;top:714px;width:1196px;height:25px;background:#fff"></div>
<div style="left:695px;top:739px;width:1196px;height:25px;background:#f3f3f3"></div>
<div style="left:695px;top:764px;width:1196px;height:25px;background:#fff"></div>
<div style="left:695px;top:789px;width:1196px;height:25px;background:#f3f3f3"></div>
<div style="left:695px;top:814px;width:1196px;height:25px;background:#fff"></div>
<div style="left:695px;top:839px;width:1196px;height:25px;background:#f3f3f3"></div>
<div style="left:695px;top:864px;width:1196px;height:25px;background:#fff"></div>
<div style="left:695px;top:889px;width:1196px;height:19px;background:#f3f3f3"></div>
<div style="left:695px;top:314px;width:20px;height:594px;background:#e5e5e5"></div>
<div style="left:815px;top:314px;width:20px;height:594px;background:#e5e5e5"></div>
<div style="left:835px;top:314px;width:20px;height:594px;background:#e5e5e5"></div>
<div style="left:955px;top:314px;width:20px;height:594px;background:#e5e5e5"></div>
<div style="left:975px;top:314px;width:20px;height:594px;background:#e5e5e5"></div>
<div style="left:1095px;top:314px;width:20px;height:594px;background:#e5e5e5"></div>
<div style="left:1115px;top:314px;width:20px;height:594px;background:#e5e5e5"></div>
<div style="left:1235px;top:314px;width:20px;height:594px;background:#e5e5e5"></div>
<div style="left:1255px;top:314px;width:20px;height:594px;background:#e5e5e5"></div>
<div style="left:1375px;top:314px;width:20px;height:594px;background:#e5e5e5"></div>
<div style="left:1395px;top:314px;width:20px;height:594px;background:#e5e5e5"></div>
<div style="left:1515px;top:314px;width:20px;height:594px;background:#e5e5e5"></div>
<div style="left:1535px;top:314px;width:20px;height:594px;background:#e5e5e5"></div>
<div style="left:1655px;top:314px;width:20px;height:594px;background:#e5e5e5"></div>
<div style="left:1675px;top:314px;width:20px;height:594px;background:#e5e5e5"></div>
<div style="left:1795px;top:314px;width:20px;height:594px;background:#e5e5e5"></div>
<div style="left:1815px;top:314px;width:20px;height:594px;background:#e5e5e5"></div>
<div style="left:695px;top:314px;width:1196px;height:25px;background:#ffe08e"></div>
<div style="left:714px;top:293px;width:1px;height:615px;background:#d0d0d0"></div>
<div style="left:734px;top:293px;width:1px;height:615px;background:#d0d0d0"></div>
<div style="left:754px;top:293px;width:1px;height:615px;background:#d0d0d0"></div>
<div style="left:774px;top:293px;width:1px;height:615px;background:#d0d0d0"></div>
<div style="left:794px;top:293px;width:1px;height:615px;background:#d0d0d0"></div>
<div style="left:814px;top:293px;width:1px;height:615px;background:#d0d0d0"></div>
<div style="left:834px;top:293px;width:1px;height:615px;background:#d0d0d0"></div>
<div style="left:854px;top:293px;width:1px;height:615px;background:#d0d0d0"></div>
<div style="left:874px;top:293px;width:1px;height:615px;background:#d0d0d0"></div>
<div style="left:894px;top:293px;width:1px;height:615px;background:#d0d0d0"></div>
<div style="left:914px;top:293px;width:1px;height:615px;background:#d0d0d0"></div>
<div style="left:934px;top:293px;width:1px;height:615px;background:#d0d0d0"></div>
<div style="left:954px;top:293px;width:1px;height:615px;background:#d0d0d0"></div>
<div style="left:974px;top:293px;width:1px;height:615px;background:#d0d0d0"></div>
<div style="left:994px;top:293px;width:1px;height:615px;background:#d0d0d0"></div>
<div style="left:1014px;top:293px;width:1px;height:615px;background:#d0d0d0"></div>
<div style="left:1034px;top:293px;width:1px;height:615px;background:#d0d0d0"></div>
<div style="left:1054px;top:293px;width:1px;height:615px;background:#d0d0d0"></div>
<div style="left:1074px;top:293px;width:1px;height:615px;background:#d0d0d0"></div>
<div style="left:1094px;top:293px;width:1px;height:615px;background:#d0d0d0"></div>
<div style="left:1114px;top:293px;width:1px;height:615px;background:#d0d0d0"></div>
<div style="left:1134px;top:293px;width:1px;height:615px;background:#d0d0d0"></div>
<div style="left:1154px;top:293px;width:1px;height:615px;background:#d0d0d0"></div>
<div style="left:1174px;top:293px;width:1px;height:615px;background:#d0d0d0"></div>
<div style="left:1194px;top:293px;width:1px;height:615px;background:#d0d0d0"></div>
<div style="left:1214px;top:293px;width:1px;height:615px;background:#d0d0d0"></div>
<div style="left:1234px;top:293px;width:1px;height:615px;background:#d0d0d0"></div>
<div style="left:1254px;top:293px;width:1px;height:615px;background:#d0d0d0"></div>
<div style="left:1274px;top:293px;width:1px;height:615px;background:#d0d0d0"></div>
<div style="left:1294px;top:293px;width:1px;height:615px;background:#d0d0d0"></div>
<div style="left:1314px;top:293px;width:1px;height:615px;background:#d0d0d0"></div>
<div style="left:1334px;top:293px;width:1px;height:615px;background:#d0d0d0"></div>
<div style="left:1354px;top:293px;width:1px;height:615px;background:#d0d0d0"></div>
<div style="left:1374px;top:293px;width:1px;height:615px;background:#d0d0d0"></div>
<div style="left:1394px;top:293px;width:1px;height:615px;background:#d0d0d0"></div>
<div style="left:1414px;top:293px;width:1px;height:615px;background:#d0d0d0"></div>
<div style="left:1434px;top:293px;width:1px;height:615px;background:#d0d0d0"></div>
<div style="left:1454px;top:293px;width:1px;height:615px;background:#d0d0d0"></div>
<div style="left:1474px;top:293px;width:1px;height:615px;background:#d0d0d0"></div>
<div style="left:1494px;top:293px;width:1px;height:615px;background:#d0d0d0"></div>
<div style="left:1514px;top:293px;width:1px;height:615px;background:#d0d0d0"></div>
<div style="left:1534px;top:293px;width:1px;height:615px;background:#d0d0d0"></div>
<div style="left:1554px;top:293px;width:1px;height:615px;background:#d0d0d0"></div>
<div style="left:1574px;top:293px;width:1px;height:615px;background:#d0d0d0"></div>
<div style="left:1594px;top:293px;width:1px;height:615px;background:#d0d0d0"></div>
<div style="left:1614px;top:293px;width:1px;height:615px;background:#d0d0d0"></div>
<div style="left:1634px;top:293px;width:1px;height:615px;background:#d0d0d0"></div>
<div style="left:1654px;top:293px;width:1px;height:615px;background:#d0d0d0"></div>
<div style="left:1674px;top:293px;width:1px;height:615px;background:#d0d0d0"></div>
<div style="left:1694px;top:293px;width:1px;height:615px;background:#d0d0d0"></div>
<div style="left:1714px;top:293px;width:1px;height:615px;background:#d0d0d0"></div>
<div style="left:1734px;top:293px;width:1px;height:615px;background:#d0d0d0"></div>
<div style="left:1754px;top:293px;width:1px;height:615px;background:#d0d0d0"></div>
<div style="left:1774px;top:293px;width:1px;height:615px;background:#d0d0d0"></div>
<div style="left:1794px;top:293px;width:1px;height:615px;background:#d0d0d0"></div>
<div style="left:1814px;top:293px;width:1px;height:615px;background:#d0d0d0"></div>
<div style="left:1834px;top:293px;width:1px;height:615px;background:#d0d0d0"></div>
<div style="left:1854px;top:293px;width:1px;height:615px;background:#d0d0d0"></div>
<div style="left:1874px;top:293px;width:1px;height:615px;background:#d0d0d0"></div>
<div style="left:834px;top:270px;width:1px;height:22px;background:#d0d0d0"></div>
<div style="left:974px;top:270px;width:1px;height:22px;background:#d0d0d0"></div>
<div style="left:1114px;top:270px;width:1px;height:22px;background:#d0d0d0"></div>
<div style="left:1254px;top:270px;width:1px;height:22px;background:#d0d0d0"></div>
<div style="left:1394px;top:270px;width:1px;height:22px;background:#d0d0d0"></div>
<div style="left:1534px;top:270px;width:1px;height:22px;background:#d0d0d0"></div>
<div style="left:1674px;top:270px;width:1px;height:22px;background:#d0d0d0"></div>
<div style="left:1814px;top:270px;width:1px;height:22px;background:#d0d0d0"></div>
<div style="left:695px;top:338px;width:1196px;height:1px;border-top:1px dotted #c4c4c4"></div>
<div style="left:695px;top:363px;width:1196px;height:1px;border-top:1px dotted #c4c4c4"></div>
<div style="left:695px;top:388px;width:1196px;height:1px;border-top:1px dotted #c4c4c4"></div>
<div style="left:695px;top:413px;width:1196px;height:1px;border-top:1px dotted #c4c4c4"></div>
<div style="left:695px;top:438px;width:1196px;height:1px;border-top:1px dotted #c4c4c4"></div>
<div style="left:695px;top:463px;width:1196px;height:1px;border-top:1px dotted #c4c4c4"></div>
<div style="left:695px;top:488px;width:1196px;height:1px;border-top:1px dotted #c4c4c4"></div>
<div style="left:695px;top:513px;width:1196px;height:1px;border-top:1px dotted #c4c4c4"></div>
<div style="left:695px;top:538px;width:1196px;height:1px;border-top:1px dotted #c4c4c4"></div>
<div style="left:695px;top:563px;width:1196px;height:1px;border-top:1px dotted #c4c4c4"></div>
<div style="left:695px;top:588px;width:1196px;height:1px;border-top:1px dotted #c4c4c4"></div>
<div style="left:695px;top:613px;width:1196px;height:1px;border-top:1px dotted #c4c4c4"></div>
<div style="left:695px;top:638px;width:1196px;height:1px;border-top:1px dotted #c4c4c4"></div>
<div style="left:695px;top:663px;width:1196px;height:1px;border-top:1px dotted #c4c4c4"></div>
<div style="left:695px;top:688px;width:1196px;height:1px;border-top:1px dotted #c4c4c4"></div>
<div style="left:695px;top:713px;width:1196px;height:1px;border-top:1px dotted #c4c4c4"></div>
<div style="left:695px;top:738px;width:1196px;height:1px;border-top:1px dotted #c4c4c4"></div>
<div style="left:695px;top:763px;width:1196px;height:1px;border-top:1px dotted #c4c4c4"></div>
<div style="left:695px;top:788px;width:1196px;height:1px;border-top:1px dotted #c4c4c4"></div>
<div style="left:695px;top:813px;width:1196px;height:1px;border-top:1px dotted #c4c4c4"></div>
<div style="left:695px;top:838px;width:1196px;height:1px;border-top:1px dotted #c4c4c4"></div>
<div style="left:695px;top:863px;width:1196px;height:1px;border-top:1px dotted #c4c4c4"></div>
<div style="left:695px;top:888px;width:1196px;height:1px;border-top:1px dotted #c4c4c4"></div>
<div style="left:695px;top:270px;width:1196px;height:41px;overflow:hidden">
<div class="t" style="left:0px;top:5px;width:140px;text-align:center;font-size:13px">2023-10-01</div>
<div class="t" style="left:140px;top:5px;width:140px;text-align:center;font-size:13px">2023-10-08</div>
<div class="t" style="left:280px;top:5px;width:140px;text-align:center;font-size:13px">2023-10-15</div>
<div class="t" style="left:420px;top:5px;width:140px;text-align:center;font-size:13px">2023-10-22</div>
<div class="t" style="left:560px;top:5px;width:140px;text-align:center;font-size:13px">2023-10-29</div>
<div class="t" style="left:700px;top:5px;width:140px;text-align:center;font-size:13px">2023-11-05</div>
<div class="t" style="left:840px;top:5px;width:140px;text-align:center;font-size:13px">2023-11-12</div>
<div class="t" style="left:980px;top:5px;width:140px;text-align:center;font-size:13px">2023-11-19</div>
<div class="t" style="left:1120px;top:5px;width:140px;text-align:center;font-size:13px">2023-11-26</div>
<div class="t" style="left:0px;top:26px;width:20px;text-align:center;font-size:13px">1</div>
<div class="t" style="left:20px;top:26px;width:20px;text-align:center;font-size:13px">2</div>
<div class="t" style="left:40px;top:26px;width:20px;text-align:center;font-size:13px">3</div>
<div class="t" style="left:60px;top:26px;width:20px;text-align:center;font-size:13px">4</div>
<div class="t" style="left:80px;top:26px;width:20px;text-align:center;font-size:13px">5</div>
<div class="t" style="left:100px;top:26px;width:20px;text-align:center;font-size:13px">6</div>
<div class="t" style="left:120px;top:26px;width:20px;text-align:center;font-size:13px">7</div>
<div class="t" style="left:140px;top:26px;width:20px;text-align:center;font-size:13px">8</div>
<div class="t" style="left:160px;top:26px;width:20px;text-align:center;font-size:13px">9</div>
<div class="t" style="left:180px;top:26px;width:20px;text-align:center;font-size:13px">10</div>
<div class="t" style="left:200px;top:26px;width:20px;text-align:center;font-size:13px">11</div>
<div class="t" style="left:220px;top:26px;width:20px;text-align:center;font-size:13px">12</div>
<div class="t" style="left:240px;top:26px;width:20px;text-align:center;font-size:13px">13</div>
<div class="t" style="left:260px;top:26px;width:20px;text-align:center;font-size:13px">14</div>
<div class="t" style="left:280px;top:26px;width:20px;text-align:center;font-size:13px">15</div>
<div class="t" style="left:300px;top:26px;width:20px;text-align:center;font-size:13px">16</div>
<div class="t" style="left:320px;top:26px;width:20px;text-align:center;font-size:13px">17</div>
<div class="t" style="left:340px;top:26px;width:20px;text-align:center;font-size:13px">18</div>
<div class="t" style="left:360px;top:26px;width:20px;text-align:center;font-size:13px">19</div>
<div class="t" style="left:380px;top:26px;width:20px;text-align:center;font-size:13px">20</div>
<div class="t" style="left:400px;top:26px;width:20px;text-align:center;font-size:13px">21</div>
<div class="t" style="left:420px;top:26px;width:20px;text-align:center;font-size:13px">22</div>
<div class="t" style="left:440px;top:26px;width:20px;text-align:center;font-size:13px">23</div>
<div class="t" style="left:460px;top:26px;width:20px;text-align:center;font-size:13px">24</div>
<div class="t" style="left:480px;top:26px;width:20px;text-align:center;font-size:13px">25</div>
<div class="t" style="left:500px;top:26px;width:20px;text-align:center;font-size:13px">26</div>
<div class="t" style="left:520px;top:26px;width:20px;text-align:center;font-size:13px">27</div>
<div class="t" style="left:540px;top:26px;width:20px;text-align:center;font-size:13px">28</div>
<div class="t" style="left:560px;top:26px;width:20px;text-align:center;font-size:13px">29</div>
<div class="t" style="left:580px;top:26px;width:20px;text-align:center;font-size:13px">30</div>
<div class="t" style="left:600px;top:26px;width:20px;text-align:center;font-size:13px">31</div>
<div class="t" style="left:620px;top:26px;width:20px;text-align:center;font-size:13px">1</div>
<div class="t" style="left:640px;top:26px;width:20px;text-align:center;font-size:13px">2</div>
<div class="t" style="left:660px;top:26px;width:20px;text-align:center;font-size:13px">3</div>
<div class="t" style="left:680px;top:26px;width:20px;text-align:center;font-size:13px">4</div>
<div class="t" style="left:700px;top:26px;width:20px;text-align:center;font-size:13px">5</div>
<div class="t" style="left:720px;top:26px;width:20px;text-align:center;font-size:13px">6</div>
<div class="t" style="left:740px;top:26px;width:20px;text-align:center;font-size:13px">7</div>
<div class="t" style="left:760px;top:26px;width:20px;text-align:center;font-size:13px">8</div>
<div class="t" style="left:780px;top:26px;width:20px;text-align:center;font-size:13px">9</div>
<div class="t" style="left:800px;top:26px;width:20px;text-align:center;font-size:13px">10</div>
<div class="t" style="left:820px;top:26px;width:20px;text-align:center;font-size:13px">11</div>
<div class="t" style="left:840px;top:26px;width:20px;text-align:center;font-size:13px">12</div>
<div class="t" style="left:860px;top:26px;width:20px;text-align:center;font-size:13px">13</div>
<div class="t" style="left:880px;top:26px;width:20px;text-align:center;font-size:13px">14</div>
<div class="t" style="left:900px;top:26px;width:20px;text-align:center;font-size:13px">15</div>
<div class="t" style="left:920px;top:26px;width:20px;text-align:center;font-size:13px">16</div>
<div class="t" style="left:940px;top:26px;width:20px;text-align:center;font-size:13px">17</div>
<div class="t" style="left:960px;top:26px;width:20px;text-align:center;font-size:13px">18</div>
<div class="t" style="left:980px;top:26px;width:20px;text-align:center;font-size:13px">19</div>
<div class="t" style="left:1000px;top:26px;width:20px;text-align:center;font-size:13px">20</div>
<div class="t" style="left:1020px;top:26px;width:20px;text-align:center;font-size:13px">21</div>
<div class="t" style="left:1040px;top:26px;width:20px;text-align:center;font-size:13px">22</div>
<div class="t" style="left:1060px;top:26px;width:20px;text-align:center;font-size:13px">23</div>
<div class="t" style="left:1080px;top:26px;width:20px;text-align:center;font-size:13px">24</div>
<div class="t" style="left:1100px;top:26px;width:20px;text-align:center;font-size:13px">25</div>
<div class="t" style="left:1120px;top:26px;width:20px;text-align:center;font-size:13px">26</div>
<div class="t" style="left:1140px;top:26px;width:20px;text-align:center;font-size:13px">27</div>
<div class="t" style="left:1160px;top:26px;width:20px;text-align:center;font-size:13px">28</div>
<div class="t" style="left:1180px;top:26px;width:20px;text-align:center;font-size:13px">29</div>
</div>
<div style="left:695px;top:314px;width:1196px;height:594px;overflow:hidden">
<div style="left:40px;top:2px;width:80px;height:8px;background:#3333f4;border:1px solid #2a2af0;opacity:.88"></div>
<div style="left:117px;top:3px;width:2px;height:6px;background:#a0bef0"></div>
<div style="left:20px;top:14px;width:100px;height:7px;background:#7d8c9a;border:1px solid #141414;opacity:.95"></div>
<div style="left:80px;top:35px;width:100px;height:4px;background:rgba(255,255,255,.55)"></div>
<div style="left:80px;top:27px;width:100px;height:8px;background:#3333f4;border:1px solid #2a2af0;opacity:.88"></div>
<div style="left:177px;top:28px;width:2px;height:6px;background:#a0bef0"></div>
<div style="left:80px;top:39px;width:100px;height:7px;background:#7d8c9a;border:1px solid #141414;opacity:.95"></div>
<div style="left:120px;top:60px;width:140px;height:4px;background:rgba(255,255,255,.55)"></div>
<div style="left:120px;top:52px;width:140px;height:8px;background:#3333f4;border:1px solid #2a2af0;opacity:.88"></div>
<div style="left:257px;top:53px;width:2px;height:6px;background:#a0bef0"></div>
<div style="left:120px;top:64px;width:140px;height:7px;background:#7d8c9a;border:1px solid #141414;opacity:.95"></div>
<div style="left:160px;top:85px;width:160px;height:4px;background:rgba(255,255,255,.55)"></div>
<div style="left:160px;top:77px;width:160px;height:8px;background:#3333f4;border:1px solid #2a2af0;opacity:.88"></div>
<div style="left:317px;top:78px;width:2px;height:6px;background:#a0bef0"></div>
<div style="left:160px;top:89px;width:160px;height:7px;background:#7d8c9a;border:1px solid #141414;opacity:.95"></div>
<div style="left:220px;top:110px;width:180px;height:4px;background:rgba(255,255,255,.55)"></div>
<div style="left:220px;top:102px;width:180px;height:8px;background:#3333f4;border:1px solid #2a2af0;opacity:.88"></div>
<div style="left:397px;top:103px;width:2px;height:6px;background:#a0bef0"></div>
<div style="left:220px;top:114px;width:180px;height:7px;background:#7d8c9a;border:1px solid #141414;opacity:.95"></div>
<div style="left:280px;top:135px;width:100px;height:4px;background:rgba(255,255,255,.55)"></div>
<div style="left:280px;top:127px;width:100px;height:8px;background:#3333f4;border:1px solid #2a2af0;opacity:.88"></div>
<div style="left:377px;top:128px;width:2px;height:6px;background:#a0bef0"></div>
<div style="left:240px;top:139px;width:100px;height:7px;background:#7d8c9a;border:1px solid #141414;opacity:.95"></div>
<div style="left:300px;top:160px;width:160px;height:4px;background:rgba(255,255,255,.55)"></div>
<div style="left:300px;top:152px;width:160px;height:8px;background:#3333f4;border:1px solid #2a2af0;opacity:.88"></div>
<div style="left:457px;top:153px;width:2px;height:6px;background:#a0bef0"></div>
<div style="left:300px;top:164px;width:160px;height:7px;background:#7d8c9a;border:1px solid #141414;opacity:.95"></div>
<div style="left:340px;top:185px;width:160px;height:4px;background:rgba(255,255,255,.55)"></div>
<div style="left:340px;top:177px;width:160px;height:8px;background:#86aaea;border:1px solid #2a2af0;opacity:.92"></div>
<div style="left:340px;top:177px;width:17px;height:8px;background:#3333f4;opacity:.88"></div>
<div style="left:340px;top:189px;width:160px;height:7px;background:#7d8c9a;border:1px solid #141414;opacity:.95"></div>
<div style="left:380px;top:210px;width:160px;height:4px;background:rgba(255,255,255,.55)"></div>
<div style="left:380px;top:202px;width:160px;height:8px;background:#3333f4;border:1px solid #2a2af0;opacity:.88"></div>
<div style="left:537px;top:203px;width:2px;height:6px;background:#a0bef0"></div>
<div style="left:380px;top:214px;width:160px;height:7px;background:#7d8c9a;border:1px solid #141414;opacity:.95"></div>
<div style="left:480px;top:235px;width:20px;height:4px;background:rgba(255,255,255,.55)"></div>
<div style="left:480px;top:227px;width:20px;height:8px;background:#3333f4;border:1px solid #2a2af0;opacity:.88"></div>
<div style="left:497px;top:228px;width:2px;height:6px;background:#a0bef0"></div>
<div style="left:480px;top:239px;width:20px;height:7px;background:#7d8c9a;border:1px solid #141414;opacity:.95"></div>
<div style="left:540px;top:252px;width:100px;height:8px;background:#3333f4;border:1px solid #2a2af0;opacity:.88"></div>
<div style="left:637px;top:253px;width:2px;height:6px;background:#a0bef0"></div>
<div style="left:600px;top:285px;width:20px;height:4px;background:rgba(255,255,255,.55)"></div>
<div style="left:600px;top:277px;width:20px;height:8px;background:#3333f4;border:1px solid #2a2af0;opacity:.88"></div>
<div style="left:617px;top:278px;width:2px;height:6px;background:#a0bef0"></div>
<div style="left:600px;top:289px;width:20px;height:7px;background:#7d8c9a;border:1px solid #141414;opacity:.95"></div>
<div style="left:620px;top:310px;width:60px;height:4px;background:rgba(255,255,255,.55)"></div>
<div style="left:620px;top:302px;width:60px;height:8px;background:#3333f4;border:1px solid #2a2af0;opacity:.88"></div>
<div style="left:677px;top:303px;width:2px;height:6px;background:#a0bef0"></div>
<div style="left:600px;top:314px;width:80px;height:7px;background:#7d8c9a;border:1px solid #141414;opacity:.95"></div>
<div style="left:640px;top:335px;width:180px;height:4px;background:rgba(255,255,255,.55)"></div>
<div style="left:640px;top:327px;width:180px;height:8px;background:#86aaea;border:1px solid #2a2af0;opacity:.92"></div>
<div style="left:640px;top:327px;width:19px;height:8px;background:#3333f4;opacity:.88"></div>
<div style="left:640px;top:339px;width:180px;height:7px;background:#7d8c9a;border:1px solid #141414;opacity:.95"></div>
<div style="left:720px;top:360px;width:300px;height:4px;background:rgba(255,255,255,.55)"></div>
<div style="left:720px;top:352px;width:300px;height:8px;background:#3333f4;border:1px solid #2a2af0;opacity:.88"></div>
<div style="left:1017px;top:353px;width:2px;height:6px;background:#a0bef0"></div>
<div style="left:720px;top:364px;width:300px;height:7px;background:#7d8c9a;border:1px solid #141414;opacity:.95"></div>
<div style="left:840px;top:385px;width:300px;height:4px;background:rgba(255,255,255,.55)"></div>
<div style="left:840px;top:377px;width:300px;height:8px;background:#3333f4;border:1px solid #2a2af0;opacity:.88"></div>
<div style="left:1137px;top:378px;width:2px;height:6px;background:#a0bef0"></div>
<div style="left:800px;top:389px;width:300px;height:7px;background:#7d8c9a;border:1px solid #141414;opacity:.95"></div>
<div style="left:660px;top:410px;width:100px;height:4px;background:rgba(255,255,255,.55)"></div>
<div style="left:660px;top:402px;width:100px;height:8px;background:#3333f4;border:1px solid #2a2af0;opacity:.88"></div>
<div style="left:757px;top:403px;width:2px;height:6px;background:#a0bef0"></div>
<div style="left:660px;top:414px;width:100px;height:7px;background:#7d8c9a;border:1px solid #141414;opacity:.95"></div>
<div style="left:760px;top:435px;width:160px;height:4px;background:rgba(255,255,255,.55)"></div>
<div style="left:760px;top:427px;width:160px;height:8px;background:#86aaea;border:1px solid #2a2af0;opacity:.92"></div>
<div style="left:760px;top:427px;width:17px;height:8px;background:#3333f4;opacity:.88"></div>
<div style="left:760px;top:439px;width:160px;height:7px;background:#7d8c9a;border:1px solid #141414;opacity:.95"></div>
<div style="left:860px;top:460px;width:260px;height:4px;background:rgba(255,255,255,.55)"></div>
<div style="left:860px;top:452px;width:260px;height:8px;background:#3333f4;border:1px solid #2a2af0;opacity:.88"></div>
<div style="left:1117px;top:453px;width:2px;height:6px;background:#a0bef0"></div>
<div style="left:860px;top:464px;width:260px;height:7px;background:#7d8c9a;border:1px solid #141414;opacity:.95"></div>
<div style="left:700px;top:485px;width:100px;height:4px;background:rgba(255,255,255,.55)"></div>
<div style="left:700px;top:477px;width:100px;height:8px;background:#3333f4;border:1px solid #2a2af0;opacity:.88"></div>
<div style="left:797px;top:478px;width:2px;height:6px;background:#a0bef0"></div>
<div style="left:700px;top:489px;width:100px;height:7px;background:#7d8c9a;border:1px solid #141414;opacity:.95"></div>
<div style="left:840px;top:510px;width:100px;height:4px;background:rgba(255,255,255,.55)"></div>
<div style="left:840px;top:502px;width:100px;height:8px;background:#3333f4;border:1px solid #2a2af0;opacity:.88"></div>
<div style="left:937px;top:503px;width:2px;height:6px;background:#a0bef0"></div>
<div style="left:800px;top:514px;width:100px;height:7px;background:#7d8c9a;border:1px solid #141414;opacity:.95"></div>
<div style="left:900px;top:535px;width:160px;height:4px;background:rgba(255,255,255,.55)"></div>
<div style="left:900px;top:527px;width:160px;height:8px;background:#3333f4;border:1px solid #2a2af0;opacity:.88"></div>
<div style="left:1057px;top:528px;width:2px;height:6px;background:#a0bef0"></div>
<div style="left:900px;top:539px;width:160px;height:7px;background:#7d8c9a;border:1px solid #141414;opacity:.95"></div>
<div style="left:960px;top:560px;width:160px;height:4px;background:rgba(255,255,255,.55)"></div>
<div style="left:960px;top:552px;width:160px;height:8px;background:#3333f4;border:1px solid #2a2af0;opacity:.88"></div>
<div style="left:1117px;top:553px;width:2px;height:6px;background:#a0bef0"></div>
<div style="left:960px;top:564px;width:160px;height:7px;background:#7d8c9a;border:1px solid #141414;opacity:.95"></div>
<div style="left:1000px;top:585px;width:160px;height:4px;background:rgba(255,255,255,.55)"></div>
<div style="left:1000px;top:577px;width:160px;height:8px;background:#3333f4;border:1px solid #2a2af0;opacity:.88"></div>
<div style="left:1157px;top:578px;width:2px;height:6px;background:#a0bef0"></div>
<div style="left:1000px;top:589px;width:160px;height:7px;background:#7d8c9a;border:1px solid #141414;opacity:.95"></div>
</div>
<div style="left:1891px;top:270px;width:15px;height:638px;background:#fafafa"></div>
<div style="left:1891px;top:314px;width:15px;height:594px;background:#fafafa"></div>
<div style="left:1894px;top:277px;width:0;height:0;border-left:5px solid transparent;border-right:5px solid transparent;border-bottom:7px solid #8a8a8a"></div>
<div style="left:1894px;top:298px;width:0;height:0;border-left:5px solid transparent;border-right:5px solid transparent;border-top:7px solid #8a8a8a"></div>
<div style="left:1894px;top:322px;width:0;height:0;border-left:5px solid transparent;border-right:5px solid transparent;border-bottom:7px solid #8a8a8a"></div>
<div style="left:1894px;top:337px;width:9px;height:271px;border-radius:5px;background:#8a8a8a"></div>
<div style="left:1894px;top:893px;width:0;height:0;border-left:5px solid transparent;border-right:5px solid transparent;border-top:7px solid #8a8a8a"></div>
<div style="left:695px;top:908px;width:1211px;height:15px;background:#fafafa"></div>
<div style="left:702px;top:910px;width:0;height:0;border-top:5px solid transparent;border-bottom:5px solid transparent;border-right:7px solid #8a8a8a"></div>
<div style="left:1876px;top:910px;width:0;height:0;border-top:5px solid transparent;border-bottom:5px solid transparent;border-left:7px solid #8a8a8a"></div>
<div style="left:718px;top:910px;width:655px;height:10px;border-radius:5px;background:#8a8a8a"></div>
<div style="left:1832px;top:933px;width:17px;height:16px;background:#4cb83a;border-radius:2px"><div style="left:2px;top:3px;width:9px;height:7px;border-radius:50%;background:#fff"></div><div style="left:6px;top:6px;width:9px;height:7px;border-radius:50%;background:#fff;border:1px solid #4cb83a"></div></div>
<div class="t" style="left:1853px;top:934px;font-size:12px;color:#333">在线支持</div>
</body></html>
